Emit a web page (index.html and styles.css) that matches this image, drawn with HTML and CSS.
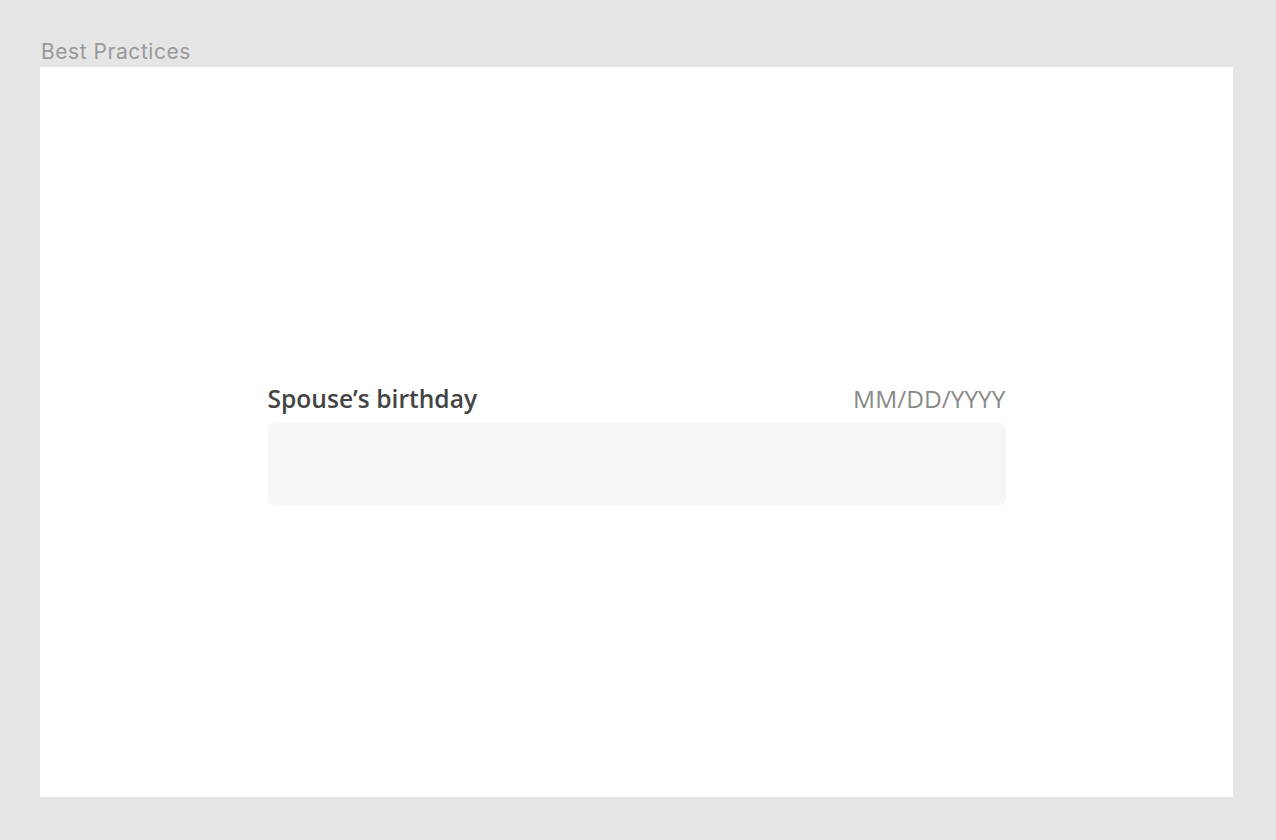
FILE: index.html
```html
<!DOCTYPE html>
<html lang="en">
<head>
<meta charset="utf-8">
<title>Best Practices</title>
<link rel="stylesheet" href="styles.css">
</head>
<body>
<div class="page">
  <div class="page-title">Best Practices</div>
  <div class="frame">
    <div class="field">
      <div class="field-head">
        <label class="field-label" for="bday">Spouse’s birthday</label>
        <span class="field-hint">MM/DD/YYYY</span>
      </div>
      <div class="field-input" id="bday"></div>
    </div>
  </div>
</div>
</body>
</html>
```

FILE: styles.css
```css
html, body {
  margin: 0;
  padding: 0;
  background: #e5e5e5;
}
.page {
  width: 1276px;
  height: 840px;
  box-sizing: border-box;
  padding: 36px 43px 0 40px;
}
.page-title {
  font-family: Inter, "Liberation Sans", sans-serif;
  font-size: 21px;
  letter-spacing: 0.55px;
  line-height: 31px;
  color: #999999;
  padding-left: 1px;
}
.frame {
  background: #ffffff;
  height: 730px;
  display: flex;
  justify-content: center;
  padding-top: 317px;
  box-sizing: border-box;
}
.field {
  width: 738px;
}
.field-head {
  display: flex;
  justify-content: space-between;
  align-items: baseline;
  height: 39px;
}
.field-label {
  font-family: "Open Sans", "Liberation Sans", sans-serif;
  font-weight: 600;
  font-size: 24.6px;
  line-height: 30px;
  color: #444444;
}
.field-hint {
  font-family: "Open Sans", "Liberation Sans", sans-serif;
  font-size: 24.5px;
  line-height: 30px;
  color: #8a8a8a;
}
.field-input {
  height: 82px;
  background: #f6f6f8;
  border-radius: 6px;
}
```
